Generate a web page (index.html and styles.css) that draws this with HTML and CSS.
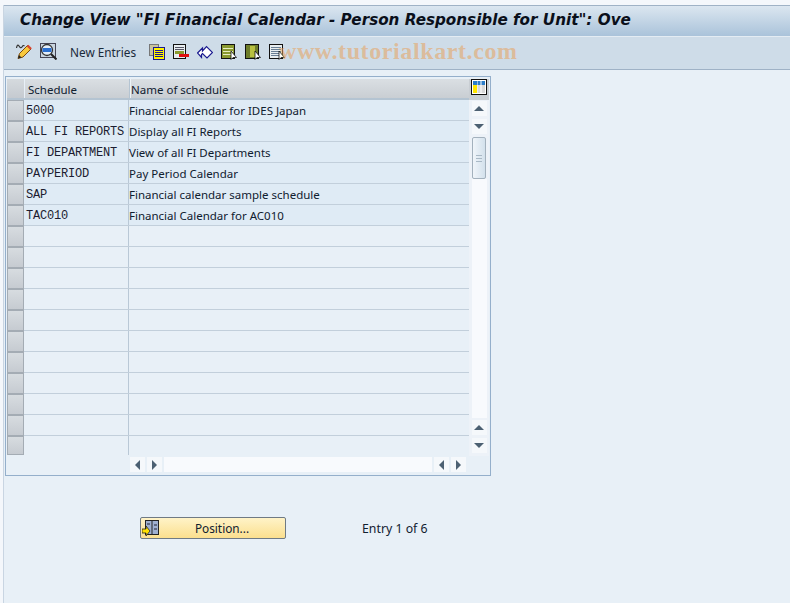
FILE: index.html
```html
<!DOCTYPE html>
<html lang="en">
<head>
    <meta charset="UTF-8">
    <title>Change View "FI Financial Calendar - Person Responsible for Unit": Overview</title>
    <link rel="stylesheet" href="styles.css">
</head>
<body>
    <div class="window">
        <div class="title-bar">
            <h1>Change View "FI Financial Calendar - Person Responsible for Unit": Ove</h1>
        </div>
        <div class="toolbar">
            <svg class="icon pencil" width="17" height="17" viewBox="0 0 17 17">
                <path d="M.5 5C1 2 2 1.500 3 3s2 2.500 3 1 1.500-2 2.500-1" fill="none" stroke="#333" stroke-width="1.200"/>
                <path d="M2 15.500l1.500-5 8-8 3.500 3.500-8 8z" fill="#f8c83c" stroke="#7a4a10"/>
                <path d="M11.500 2.500l3.500 3.500" stroke="#d8452f" stroke-width="2.400"/>
                <path d="M2 15.500l1-3.500 2.500 2.500z" fill="#222"/>
            </svg>
            <svg class="icon glass" width="17" height="17" viewBox="0 0 17 17">
                <rect x=".5" y=".5" width="15" height="14" fill="#c8d4de" stroke="#445"/>
                <circle cx="7" cy="7" r="5.500" fill="#e4eef8" stroke="#333" stroke-width="1.300"/>
                <path d="M2.500 5h9v4h-9z" fill="#2a6fd0"/>
                <path d="M11 11l5.500 5.500" stroke="#222" stroke-width="2"/>
            </svg>
            <span class="new-entries">New Entries</span>
            <svg class="icon copy" width="16" height="16" viewBox="0 0 16 16">
                <rect x=".5" y=".5" width="9" height="11" fill="#c8c4a0" stroke="#777"/>
                <rect x="4.500" y="3.500" width="11" height="12" fill="#fff200" stroke="#1a1a90"/>
                <path d="M6 6.500h8M6 8.500h8M6 10.500h8M6 12.500h8" stroke="#1a1a90"/>
            </svg>
            <svg class="icon delete" width="16" height="16" viewBox="0 0 16 16">
                <rect x=".5" y=".5" width="12" height="14" fill="#e8eef0" stroke="#111"/>
                <path d="M2 3.500h9M2 5.500h9" stroke="#556"/>
                <rect x="2" y="7" width="9" height="3" fill="#8a9a30"/>
                <rect x="6" y="10" width="10" height="3" fill="#e01010"/>
            </svg>
            <svg class="icon undo" width="16" height="16" viewBox="0 0 16 16">
                <path d="M.5 9l5-5v3l4-4.500 6 6-5.500 5.500-4.500-4.500-1 1v3z" fill="#fff" stroke="#1a1a90" stroke-width="1.200"/>
            </svg>
            <svg class="icon select-all" width="16" height="16" viewBox="0 0 16 16">
                <rect x=".5" y=".5" width="13" height="14" fill="#8a9a30" stroke="#111"/>
                <path d="M2 4.500h10M2 7.500h10M2 10.500h10" stroke="#e8eec0"/>
                <path d="M10 7v8.500l2-2 3.500 0z" fill="#fff" stroke="#111" stroke-width=".8"/>
            </svg>
            <svg class="icon select-block" width="16" height="16" viewBox="0 0 16 16">
                <rect x=".5" y=".5" width="13" height="14" fill="#6e7d2a" stroke="#111"/>
                <rect x="5" y="2" width="5" height="11" fill="#b8c040"/>
                <path d="M10 7v8.500l2-2 3.500 0z" fill="#fff" stroke="#111" stroke-width=".8"/>
            </svg>
            <svg class="icon deselect" width="16" height="16" viewBox="0 0 16 16">
                <rect x=".5" y=".5" width="13" height="14" fill="#e8eef0" stroke="#111"/>
                <path d="M2 3.500h10M2 5.500h10M2 7.500h10M2 9.500h10M2 11.500h8" stroke="#6a7f95"/>
                <path d="M10 7v8.500l2-2 3.500 0z" fill="#fff" stroke="#111" stroke-width=".8"/>
            </svg>
        </div>

        <div class="content">
            <div class="table-box">
                <div class="table-main">
                    <div class="header-row">
                        <div class="corner"></div>
                        <div class="head key-col">Schedule</div>
                        <div class="head name-col">Name of schedule</div>
                    </div>
                    <div class="row filled"><div class="sel"></div><div class="cell key-col mono">5000</div><div class="cell name-col">Financial calendar for IDES Japan</div></div>
                    <div class="row filled"><div class="sel"></div><div class="cell key-col mono">ALL FI REPORTS</div><div class="cell name-col">Display all FI Reports</div></div>
                    <div class="row filled"><div class="sel"></div><div class="cell key-col mono">FI DEPARTMENT</div><div class="cell name-col">View of all FI Departments</div></div>
                    <div class="row filled"><div class="sel"></div><div class="cell key-col mono">PAYPERIOD</div><div class="cell name-col">Pay Period Calendar</div></div>
                    <div class="row filled"><div class="sel"></div><div class="cell key-col mono">SAP</div><div class="cell name-col">Financial calendar sample schedule</div></div>
                    <div class="row filled"><div class="sel"></div><div class="cell key-col mono">TAC010</div><div class="cell name-col">Financial Calendar for AC010</div></div>
                    <div class="row"><div class="sel"></div><div class="cell key-col"></div><div class="cell name-col"></div></div>
                    <div class="row"><div class="sel"></div><div class="cell key-col"></div><div class="cell name-col"></div></div>
                    <div class="row"><div class="sel"></div><div class="cell key-col"></div><div class="cell name-col"></div></div>
                    <div class="row"><div class="sel"></div><div class="cell key-col"></div><div class="cell name-col"></div></div>
                    <div class="row"><div class="sel"></div><div class="cell key-col"></div><div class="cell name-col"></div></div>
                    <div class="row"><div class="sel"></div><div class="cell key-col"></div><div class="cell name-col"></div></div>
                    <div class="row"><div class="sel"></div><div class="cell key-col"></div><div class="cell name-col"></div></div>
                    <div class="row"><div class="sel"></div><div class="cell key-col"></div><div class="cell name-col"></div></div>
                    <div class="row"><div class="sel"></div><div class="cell key-col"></div><div class="cell name-col"></div></div>
                    <div class="row"><div class="sel"></div><div class="cell key-col"></div><div class="cell name-col"></div></div>
                    <div class="row last"><div class="sel"></div><div class="cell key-col"></div><div class="cell name-col"></div></div>
                    <div class="hscroll">
                        <div class="sb-btn"><span class="tri left"></span></div>
                        <div class="sb-btn"><span class="tri right"></span></div>
                        <div class="sb-track"></div>
                        <div class="sb-btn"><span class="tri left"></span></div>
                        <div class="sb-btn"><span class="tri right"></span></div>
                    </div>
                </div>
                <div class="vscroll">
                    <div class="config-btn">
                        <svg width="16" height="16" viewBox="0 0 16 16">
                            <rect x=".5" y=".5" width="15" height="15" fill="#fff" stroke="#111"/>
                            <rect x="2" y="2" width="4" height="4" fill="#2b7cc8"/>
                            <rect x="6.500" y="2" width="3" height="4" fill="#2b7cc8"/>
                            <rect x="10.500" y="2" width="3.500" height="4" fill="#2b7cc8"/>
                            <rect x="2" y="6" width="4" height="8" fill="#ffe600"/>
                            <rect x="6.500" y="6" width="3" height="8" fill="#d8d8d8"/>
                            <rect x="10.500" y="6" width="3.500" height="8" fill="#d8d8d8"/>
                        </svg>
                    </div>
                    <div class="sb-btn"><span class="tri up"></span></div>
                    <div class="sb-btn"><span class="tri down"></span></div>
                    <div class="thumb"><span class="grip"></span></div>
                    <div class="sb-track"></div>
                    <div class="sb-btn"><span class="tri up"></span></div>
                    <div class="sb-btn"><span class="tri down"></span></div>
                </div>
            </div>

            <div class="position-row">
                <button class="position-btn">
                    <svg width="17" height="17" viewBox="0 0 17 17">
                        <rect x="3.500" y=".5" width="13" height="14" fill="#9fb0d0" stroke="#222"/>
                        <path d="M10 1v13" stroke="#222"/>
                        <path d="M12 5h3M12 9h3M5 4h3" stroke="#223"/>
                        <path d="M0 9h4V6l4 5-4 5v-3H0z" fill="#ffe000" stroke="#222" stroke-width=".8"/>
                    </svg>
                    <span>Position...</span>
                </button>
                <span class="entry-info">Entry 1 of 6</span>
            </div>
        </div>
    </div>
    <div class="watermark">www.tutorialkart.com</div>
</body>
</html>
```

FILE: styles.css
```css
html, body {
    margin: 0;
    height: 100%;
    overflow: hidden;
    background-color: #f4f7fb;
    font-family: "Noto Sans", "DejaVu Sans", sans-serif;
    color: #10202f;
}
.window {
    margin: 5px 0 0 3px;
    height: 598px;
    background-color: #e8f0f7;
    border-left: 1px solid #c9d5e2;
    display: flex;
    flex-direction: column;
}
.title-bar {
    height: 31px;
    box-sizing: border-box;
    border-top: 1px solid #9fb2c6;
    background: linear-gradient(#dbe6f0, #aac3da);
    padding-left: 16px;
    overflow: hidden;
    white-space: nowrap;
}
h1 {
    margin: 0;
    font-family: "DejaVu Sans", sans-serif;
    font-size: 15.2px;
    font-weight: bold;
    font-style: italic;
    line-height: 28px;
    color: #0a0f1a;
}
.toolbar {
    height: 34px;
    box-sizing: border-box;
    background-color: #cedce8;
    border-top: 1px solid #e4ecf3;
    border-bottom: 1px solid #9fb2c6;
    display: flex;
    align-items: center;
    padding: 0 0 3px 12px;
}
.toolbar .icon {
    flex: none;
    margin-left: 8px;
}
.toolbar .pencil {
    margin-left: 0;
}
.toolbar .glass {
    margin-left: 7px;
}
.new-entries {
    width: 79px;
    flex: none;
    box-sizing: border-box;
    margin: 1px 0 0 13px;
    font-size: 11.8px;
    color: #1a2a3a;
}
.toolbar .copy {
    margin-left: 0;
}
.content {
    padding: 6px 0 0 1px;
}
.table-box {
    width: 486px;
    height: 400px;
    box-sizing: border-box;
    border: 1px solid #94afcb;
    padding: 2px 0 0 1px;
    display: flex;
}
.table-main {
    width: 463px;
}
.header-row, .row {
    display: flex;
}
.header-row {
    height: 21px;
    box-sizing: border-box;
    border-bottom: 2px solid #b4c4d2;
    background: linear-gradient(#dadfe3, #c9ced3);
}
.corner {
    width: 17px;
    background: linear-gradient(#d5dade, #c5cad0);
    border-right: 1px solid #e8f0f7;
}
.head {
    font-size: 11.5px;
    line-height: 21px;
    padding-left: 3px;
    box-sizing: border-box;
    border-right: 1px solid #b4c4d2;
}
.key-col {
    width: 105px;
    flex: none;
}
.name-col {
    flex: 1;
}
.head.name-col {
    padding-left: 0;
    border-right: 0;
    border-left: 1px solid #eef3f7;
}
.row {
    height: 21px;
    box-sizing: border-box;
    border-bottom: 1px solid #c2cfdb;
}
.row.filled {
    background-color: #dfebf5;
}
.row.last {
    border-bottom: 0;
    height: 19px;
}
.sel {
    width: 17px;
    flex: none;
    box-sizing: border-box;
    margin-bottom: -1px;
    background: linear-gradient(#d7dce0, #c6cbd1);
    border: 1px solid #a4acb4;
}
.last .sel {
    margin-bottom: 0;
}
.cell {
    font-size: 11.5px;
    line-height: 22px;
    box-sizing: border-box;
    white-space: nowrap;
}
.cell.key-col {
    padding-left: 2px;
    border-right: 1px solid #b9c8d6;
}
.mono {
    font-family: "Liberation Mono", monospace;
    font-size: 12px;
    letter-spacing: -.2px;
    color: #1c1c30;
}
.hscroll {
    display: flex;
    align-items: center;
    gap: 2px;
    height: 15px;
    margin-top: 2px;
    padding-left: 123px;
}
.hscroll .sb-track {
    width: 268px;
    height: 15px;
}
.vscroll {
    width: 20px;
    margin-left: -1px;
    display: flex;
    flex-direction: column;
    align-items: center;
    background-color: #edf2f8;
    height: 377px;
}
.config-btn {
    width: 20px;
    height: 21px;
    box-sizing: border-box;
    padding-left: 2px;
    background-color: #c9ced3;
    margin-bottom: 1px;
}
.config-btn svg {
    display: block;
}
.sb-btn {
    width: 15px;
    height: 15px;
    flex: none;
    background-color: #f5f8fb;
    display: flex;
    align-items: center;
    justify-content: center;
}
.vscroll .sb-btn {
    margin-bottom: 3px;
}
.sb-track {
    background-color: #f8fafd;
}
.vscroll .sb-track {
    width: 15px;
    flex: 1;
    margin-bottom: 2px;
}
.thumb {
    width: 14px;
    height: 42px;
    flex: none;
    box-sizing: border-box;
    border: 1px solid #a3b1bd;
    border-radius: 2px;
    background: linear-gradient(90deg, #f0f5fa, #d3e1ec);
    display: flex;
    align-items: center;
    justify-content: center;
}
.grip {
    width: 6px;
    height: 8px;
    background: repeating-linear-gradient(#a9b9c6 0 1px, transparent 1px 3px);
    margin-top: 2px;
}
.tri {
    width: 0;
    height: 0;
    border-style: solid;
    border-color: transparent;
}
.tri.up {
    border-width: 0 5px 5px;
    border-bottom-color: #4c6072;
}
.tri.down {
    border-width: 5px 5px 0;
    border-top-color: #4c6072;
}
.tri.left {
    border-width: 5px 5px 5px 0;
    border-right-color: #4c6072;
}
.tri.right {
    border-width: 5px 0 5px 5px;
    border-left-color: #4c6072;
}
.position-row {
    display: flex;
    align-items: center;
    margin-top: 41px;
    padding-left: 135px;
}
.position-btn {
    width: 146px;
    height: 22px;
    box-sizing: border-box;
    padding: 0 0 0 1px;
    border: 1px solid #6f7a84;
    border-radius: 2px;
    background: linear-gradient(#fff3c8, #fbdf8e);
    display: flex;
    align-items: center;
    font-family: inherit;
    font-size: 11.8px;
    color: #10202f;
}
.position-btn span {
    flex: 1;
    text-align: center;
}
.entry-info {
    margin-left: 76px;
    font-size: 12.3px;
}
.watermark {
    position: absolute;
    left: 279px;
    top: 38px;
    font-family: "Liberation Serif", serif;
    font-size: 24px;
    font-weight: bold;
    letter-spacing: .6px;
    color: rgba(232, 160, 90, .55);
    white-space: nowrap;
}
```
